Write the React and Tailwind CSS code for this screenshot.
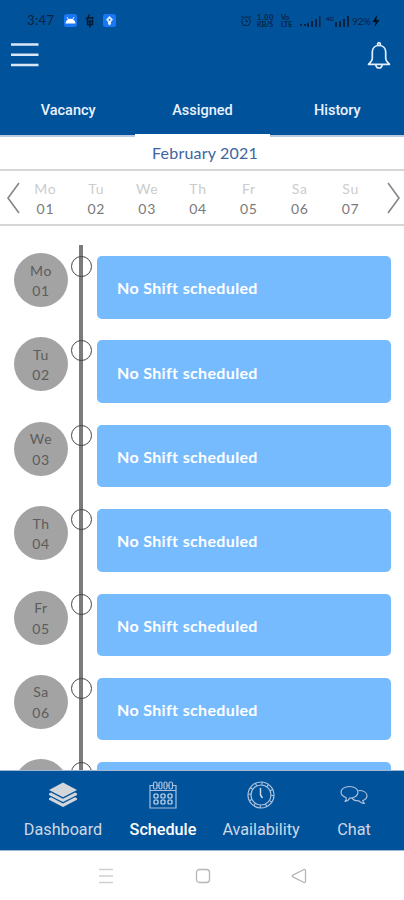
import React from "react";

const days = [
  ["Mo", "01"],
  ["Tu", "02"],
  ["We", "03"],
  ["Th", "04"],
  ["Fr", "05"],
  ["Sa", "06"],
  ["Su", "07"],
];

function StatusBar() {
  return (
    <div className="flex h-[40px] items-center pl-[27px] pr-[24px] pt-[1px] text-[#0a2340]">
      <span className="w-[37px] text-[13px] leading-none tracking-[0.4px]">3:47</span>
      <svg width="13" height="13" viewBox="0 0 13 13">
        <rect width="13" height="13" rx="2.5" fill="#1976f5" />
        <path d="M1.5 9.5C1.7 6.5 3.8 4.8 6.5 4.8S11.3 6.5 11.5 9.5Z" fill="#fff" />
        <path d="M3 3.2l1.500 2.500M10 3.2L8.500 5.700" stroke="#fff" />
      </svg>
      <svg className="ml-[8px]" width="10" height="14" viewBox="0 0 10 14" fill="none" stroke="#071a30" strokeWidth="1.400">
        <path d="M4.500 0.500L3 3.500M0.500 4.500L8.500 3.500M2.500 5v5.500h5V4M5 6v7.500M3 7.500h4" />
      </svg>
      <svg className="ml-[8px]" width="13" height="13" viewBox="0 0 13 13">
        <rect width="13" height="13" rx="2.500" fill="#1976f5" />
        <path d="M6.500 2L10 5.500 8 8v2L6.500 11.500 5 10V8L3 5.500Z" fill="#dcecff" />
        <circle cx="6.500" cy="5.800" r="1" fill="#1976f5" />
      </svg>
      <div className="ml-auto flex items-center">
        <svg width="12" height="12" viewBox="0 0 12 12" fill="none" stroke="currentColor">
          <circle cx="6" cy="6.300" r="4.300" />
          <path d="M6 4v2.500h2M1 2.500L3 1M11 2.500L9 1M2.500 10.500l1-1M9.500 10.500l-1-1" />
        </svg>
        <div className="ml-[5px] flex w-[18px] flex-col text-[7px] font-bold leading-[7px]">
          <span className="tracking-[0.8px]">1.00</span>
          <span className="tracking-[-0.1px]">KB/S</span>
        </div>
        <div className="ml-[6px] flex w-[14px] flex-col text-[7px] font-bold leading-[7px]">
          <span>Vo</span>
          <span>LTE</span>
        </div>
        <svg className="ml-[5px]" width="22" height="12" viewBox="0 0 22 12" fill="currentColor">
          <path d="M0 9h2v2H0zM4 9h2v2H4zM7 8h2v4H7zM11 6h2v6h-2zM15 4h2v8h-2zM19 1h1.500v11H19z" />
        </svg>
        <div className="ml-[4px] flex h-[12px] w-[23px] items-start">
          <span className="w-[9px] text-[6px] font-bold leading-[7px]">4G</span>
          <svg width="14" height="12" viewBox="0 0 14 12" fill="currentColor">
            <path d="M0 7h2v5H0zM4 6h2v6H4zM8 4h2v8H8zM12 1h2v11h-2z" />
          </svg>
        </div>
        <span className="ml-[3px] w-[20px] text-[10px] leading-none tracking-[-0.3px]">92%</span>
        <svg width="8" height="12" viewBox="0 0 8 12" fill="#03101f">
          <path d="M5 0L0.500 7H3.500L2.500 12 7.500 5H4.500Z" />
        </svg>
      </div>
    </div>
  );
}

function Header() {
  return (
    <header className="flex h-[137px] flex-col bg-[#00529b]">
      <StatusBar />
      <div className="flex h-[46px] items-start justify-between pl-[11px] pr-[13px]">
        <svg className="mt-[2px]" width="28" height="26" viewBox="0 0 28 26" stroke="#dbe7f7" strokeWidth="2.600">
          <path d="M0 2.500h27.500M0 12.800h27.500M0 23h27.500" />
        </svg>
        <svg className="mt-[2px]" width="24" height="29" viewBox="0 0 24 29" fill="none" stroke="#e3eefc" strokeWidth="1.700" strokeLinejoin="round">
          <path d="M12 3.500C8 3.500 5.300 6.300 5.300 10v6.500C5.300 19 3.500 20 1.500 22.300H22.500C20.500 20 18.700 19 18.700 16.500V10C18.700 6.300 16 3.500 12 3.500Z" />
          <path d="M10.700 3.200V2a1.300 1.300 0 0 1 2.600 0v1.200M8.800 22.800c.4 2.200 1.600 3.200 3.200 3.200s2.800-1 3.200-3.200" />
        </svg>
      </div>
      <nav className="grid h-[51px] grid-cols-3 pl-px text-center font-['Roboto','Liberation_Sans',sans-serif] text-[14.500px] font-medium leading-[46px] text-[#e9f2ff]">
        <span className="-ml-px border-b-[2px] border-[#b9c9e0] pl-px pt-[2px]">Vacancy</span>
        <span className="border-b-[3px] border-white pt-[2px]">Assigned</span>
        <span className="border-b-[2px] border-[#b9c9e0] pl-px pt-[2px]">History</span>
      </nav>
    </header>
  );
}

function WeekStrip() {
  return (
    <div className="flex h-[55px] items-center border-b-2 border-[#d6d6d6] pl-[7px]">
      <svg width="13" height="32" viewBox="0 0 13 32" fill="none" stroke="#858585" strokeWidth="1.600">
        <path d="M12 1L1 16 12 31" />
      </svg>
      <div className="grid w-[356px] grid-cols-7 pt-[2px] text-center">
        {days.map(([name, date]) => (
          <div key={name} className="flex flex-col text-[14px] leading-[20px] tracking-[0.7px]">
            <span className="text-[#cccccc]">{name}</span>
            <span className="text-[#7a7a7a]">{date}</span>
          </div>
        ))}
      </div>
      <svg className="ml-[11px]" width="13" height="32" viewBox="0 0 13 32" fill="none" stroke="#858585" strokeWidth="1.600">
        <path d="M1 1L12 16 1 31" />
      </svg>
    </div>
  );
}

function Timeline() {
  return (
    <main className="relative h-[544px] overflow-hidden pt-[30px]">
      <div className="absolute left-[79px] top-[19px] h-[525px] w-[4px] bg-[#7b7b7b]" />
      {days.map(([name, date]) => (
        <div key={name} className="relative flex h-[84.400px] items-start pl-[14px]">
          <div className="mt-[-3px] flex h-[54px] w-[54px] shrink-0 flex-col items-center justify-center rounded-full bg-[#a3a3a3] pt-[2px] text-[14px] leading-[20.500px] tracking-[0.6px] text-[#5c5c5c]">
            <span>{name}</span>
            <span>{date}</span>
          </div>
          <div className="ml-[2.500px] h-[21px] w-[21px] shrink-0 rounded-full border border-[#444]" />
          <div className="ml-[5.500px] flex h-[62.500px] w-[294px] items-center rounded-[5px] bg-[#77bbff] pl-[20px] pt-[2px] text-[16px] font-bold tracking-[0.350px] text-white">
            No Shift scheduled
          </div>
        </div>
      ))}
    </main>
  );
}

function BottomNav() {
  return (
    <nav className="flex h-[81px] justify-center border-y border-[#9db8d6] bg-[#00529b] pl-[2px] font-['Roboto','Liberation_Sans',sans-serif] text-[16.200px] text-[#cfd8e4]">
      <div className="flex w-[106px] flex-col items-center pt-[10px]">
        <svg width="30" height="28" viewBox="0 0 30 28" fill="#d3d6da">
          <path d="M15 1.500L29 9 15 16.200 1 9ZM1 12.500l2-1 12 6.200 12-6.200 2 1V14L15 21 1 14ZM1 17.200l2-1 12 6.200 12-6.200 2 1v1.500L15 26 1 18.700Z" />
        </svg>
        <span className="mt-[9px] leading-[24px]">Dashboard</span>
      </div>
      <div className="flex w-[94px] flex-col items-center pt-[10px]">
        <svg width="28" height="28" viewBox="0 0 28 28" fill="none" stroke="#a9c0dc" strokeWidth="1.200">
          <path d="M4 4.500H1v22.500h26V4.500h-3M1 9.500h26M8 4.500h2M18 4.500h2" />
          <rect x="4.500" y="1" width="3.500" height="7" rx="1.500" />
          <rect x="10" y="1" width="3" height="7" rx="1.500" />
          <rect x="15" y="1" width="3" height="7" rx="1.500" />
          <rect x="20" y="1" width="3.500" height="7" rx="1.500" />
          <g stroke="#d3e0ef" strokeWidth="1.200">
            <rect x="5" y="13" width="4" height="4" rx="1" />
            <rect x="5" y="19" width="4" height="4" rx="1" />
            <rect x="12" y="13" width="4" height="4" rx="1" />
            <rect x="12" y="19" width="4" height="4" rx="1" />
            <rect x="19" y="13" width="4" height="4" rx="1" />
            <rect x="19" y="19" width="4" height="4" rx="1" />
          </g>
        </svg>
        <span className="mt-[9px] font-medium leading-[24px] text-white">Schedule</span>
      </div>
      <div className="flex w-[102px] flex-col items-center pt-[10px]">
        <svg width="28" height="28" viewBox="0 0 28 28" fill="none" stroke="#adc2dc" strokeWidth="1.200">
          <circle cx="14" cy="14" r="13" />
          <circle cx="14" cy="14" r="10" />
          <circle cx="14" cy="14" r="11.500" strokeWidth="2.500" strokeDasharray="1.200 4.820" />
          <path d="M13.500 7v7l2 3" stroke="#d5e0ee" strokeWidth="1.400" />
        </svg>
        <span className="mt-[9px] leading-[24px]">Availability</span>
      </div>
      <div className="flex w-[84px] flex-col items-center pt-[10px]">
        <svg width="28" height="28" viewBox="0 0 28 28" fill="none" stroke="#adc2dc" strokeWidth="1.200" strokeLinejoin="round">
          <path d="M9.500 5.500c5 0 8.500 2.400 8.500 5.800s-3.500 5.800-8.500 5.800c-.5 1.700-2 3-4.500 3.400 1-1 1.500-2.300 1.200-3.800C3 15.500 1 13.600 1 11.300c0-3.400 3.500-5.800 8.500-5.800Z" />
          <path d="M18.500 9.500c5 0 8.500 2 8.500 5.200 0 2.300-1.700 4-4.300 4.800.2 1.300.8 2.200 1.800 3-2.800-.2-4.600-1.200-5.500-2.700-3.300.2-5.800-.8-7-2.900" />
        </svg>
        <span className="mt-[9px] leading-[24px]">Chat</span>
      </div>
    </nav>
  );
}

function SystemNav() {
  return (
    <footer className="flex h-[49px] items-center justify-between bg-white pl-[98px] pr-[97px]">
      <svg width="16" height="16" viewBox="0 0 16 16" stroke="#d0d0d0" strokeWidth="1.500">
        <path d="M1 1.500h14M1 8h14M1 14.500h14" />
      </svg>
      <svg width="16" height="16" viewBox="0 0 16 16" fill="none" stroke="#b5b5b5" strokeWidth="1.300">
        <rect x="1.500" y="1.500" width="13" height="13" rx="3" />
      </svg>
      <svg width="16" height="16" viewBox="0 0 16 16" fill="none" stroke="#b5b5b5" strokeWidth="1.300" strokeLinejoin="round">
        <path d="M13 1.500L1.800 7.200q-1 .8 0 1.600L13 14.500q1.500 .3 1.500-1.500V3q0-1.800-1.500-1.500Z" />
      </svg>
    </footer>
  );
}

export default function App() {
  return (
    <div className="flex h-[900px] w-[404px] flex-col overflow-hidden bg-white font-['Lato','Noto_Sans',sans-serif]">
      <Header />
      <div className="h-[34px] border-b-2 border-[#d6d6d6] pl-[6px] text-center text-[16px] leading-[31px] tracking-[0.200px] text-[#3d659f]">
        February 2021
      </div>
      <WeekStrip />
      <Timeline />
      <BottomNav />
      <SystemNav />
    </div>
  );
}
